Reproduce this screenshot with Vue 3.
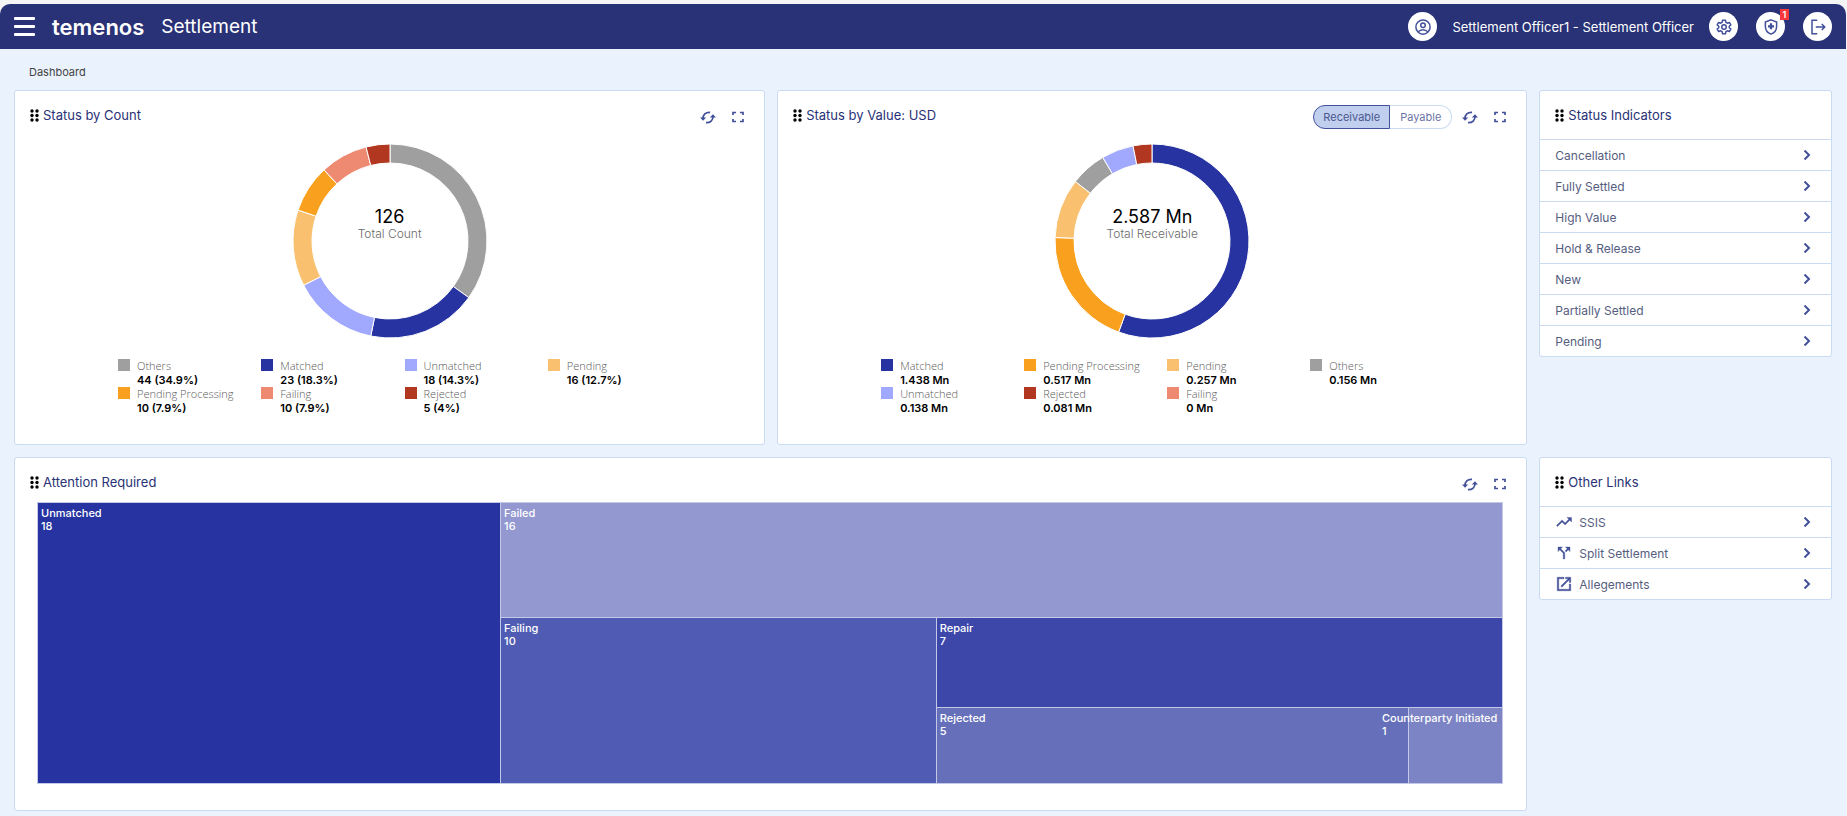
<script setup>
import { ref } from 'vue'

const side = ref('Receivable')

const C = {
  grey: '#9f9f9f', navy: '#2633a0', lilac: '#a1a9ff', sand: '#f9c16f',
  orange: '#f9a11f', salmon: '#ee8a72', brick: '#b13720'
}

const charts = [
  {
    title: 'Status by Count', total: '126', caption: 'Total Count', toggle: false,
    items: [
      { label: 'Others', n: 44, text: '44 (34.9%)', color: C.grey },
      { label: 'Matched', n: 23, text: '23 (18.3%)', color: C.navy },
      { label: 'Unmatched', n: 18, text: '18 (14.3%)', color: C.lilac },
      { label: 'Pending', n: 16, text: '16 (12.7%)', color: C.sand },
      { label: 'Pending Processing', n: 10, text: '10 (7.9%)', color: C.orange },
      { label: 'Failing', n: 10, text: '10 (7.9%)', color: C.salmon },
      { label: 'Rejected', n: 5, text: '5 (4%)', color: C.brick }
    ]
  },
  {
    title: 'Status by Value: USD', total: '2.587 Mn', caption: 'Total Receivable', toggle: true,
    items: [
      { label: 'Matched', n: 1.438, text: '1.438 Mn', color: C.navy },
      { label: 'Pending Processing', n: 0.517, text: '0.517 Mn', color: C.orange },
      { label: 'Pending', n: 0.257, text: '0.257 Mn', color: C.sand },
      { label: 'Others', n: 0.156, text: '0.156 Mn', color: C.grey },
      { label: 'Unmatched', n: 0.138, text: '0.138 Mn', color: C.lilac },
      { label: 'Rejected', n: 0.081, text: '0.081 Mn', color: C.brick },
      { label: 'Failing', n: 0, text: '0 Mn', color: C.salmon }
    ]
  }
]

function arcs(items) {
  const sum = items.reduce((s, i) => s + i.n, 0)
  const R = 97
  const r = 78
  let a = 0
  return items.filter(i => i.n > 0).map(i => {
    const b = a + (i.n / sum) * Math.PI * 2
    const large = b - a > Math.PI ? 1 : 0
    const p = (rad, t) => `${(98 + rad * Math.sin(t)).toFixed(2)} ${(98 - rad * Math.cos(t)).toFixed(2)}`
    const d = `M${p(R, a)}A${R} ${R} 0 ${large} 1 ${p(R, b)}L${p(r, b)}A${r} ${r} 0 ${large} 0 ${p(r, a)}Z`
    a = b
    return { d, color: i.color }
  })
}

const indicators = ['Cancellation', 'Fully Settled', 'High Value', 'Hold & Release', 'New', 'Partially Settled', 'Pending']

const links = [
  { name: 'SSIS', icon: 'M16 6l2.29 2.29-4.88 4.88-4-4L2 16.59 3.41 18l6-6 4 4 6.3-6.29L22 12V6z' },
  { name: 'Split Settlement', icon: 'M14 4l2.29 2.29-2.88 2.88 1.42 1.42 2.88-2.88L20 10V4zM10 4H4v6l2.29-2.29 4.71 4.7V20h2v-8.41l-5.29-5.3z' },
  { name: 'Allegements', icon: 'M19 19H5V5h7V3H3v18h18v-9h-2v7zM14 3v2h3.59l-9.83 9.83 1.41 1.41L19 6.41V10h2V3h-7z' }
]
</script>

<template>
  <div class="page">
    <header class="bar">
      <button class="menu" aria-label="Menu"><i></i><i></i><i></i></button>
      <span class="brand">temenos</span>
      <span class="product">Settlement</span>
      <div class="tools">
        <button class="round" aria-label="Profile">
          <svg viewBox="0 0 24 24" width="18" height="18"><g fill="none" stroke="currentColor" stroke-width="2"><circle cx="12" cy="12" r="9.5" /><circle cx="12" cy="9.5" r="3" /><path d="M5.5 18.5c3.5-4 9.5-4 13 0" /></g></svg>
        </button>
        <span class="user">Settlement Officer1 - Settlement Officer</span>
        <button class="round" aria-label="Settings">
          <svg viewBox="0 0 24 24" width="18" height="18"><g fill="none" stroke="currentColor" stroke-width="2" stroke-linejoin="round"><path d="M10 3h4l.5 2.7 2 1.2 2.6-1 2 3.4-2.1 1.7v2l2.1 1.7-2 3.4-2.6-1-2 1.2L14 21h-4l-.5-2.7-2-1.2-2.6 1-2-3.4L5 13v-2L2.9 9.3l2-3.4 2.6 1 2-1.2z" /><circle cx="12" cy="12" r="3" /></g></svg>
        </button>
        <button class="round" aria-label="Alerts">
          <svg viewBox="0 0 24 24" width="18" height="18"><path d="M12 2.5l7.5 3V11c0 5-3 8.8-7.5 10.5C7.5 19.8 4.5 16 4.5 11V5.5z" fill="none" stroke="currentColor" stroke-width="2" /><path d="M10.5 7h3v2.500H16v3h-2.500V15h-3v-2.500H8v-3h2.500z" fill="currentColor" /></svg>
          <span class="badge">1</span>
        </button>
        <button class="round" aria-label="Log out">
          <svg viewBox="0 0 24 24" width="18" height="18" fill="none" stroke="currentColor" stroke-width="2"><path d="M11 3H4v18h7M9 12h11.500M17 8l4 4-4 4" /></svg>
        </button>
      </div>
    </header>

    <nav class="crumb">Dashboard</nav>

    <main class="board">
      <section v-for="c in charts" :key="c.title" class="card">
        <div class="head">
          <svg class="grip" viewBox="0 0 9 13" width="9" height="13"><g v-for="y in [2, 6.5, 11]" :key="y"><circle cx="2" :cy="y" r="1.7" /><circle cx="7" :cy="y" r="1.7" /></g></svg>
          <h2>{{ c.title }}</h2>
          <div class="acts">
            <div v-if="c.toggle" class="toggle">
              <button v-for="s in ['Receivable', 'Payable']" :key="s" :class="{ on: side === s }" @click="side = s">{{ s }}</button>
            </div>
            <button class="act" aria-label="Refresh"><svg viewBox="0 0 16 13" width="16" height="13"><g fill="none" stroke="currentColor" stroke-width="1.7"><path d="M3 7.500C3 3.800 5.500 1 10 1.300M13 5.500c0 3.700-2.500 6.500-7 6.200" /></g><path d="M0 6.500h6.200L3 9.800zM16 6.500H9.800L13 3.200z" fill="currentColor" /></svg></button>
            <button class="act" aria-label="Full screen"><svg viewBox="0 0 12 12" width="12" height="12"><path d="M1 4V1.500h3M8 1.500h3V4M11 8v2.500H8M4 10.500H1V8" fill="none" stroke="currentColor" stroke-width="1.7" /></svg></button>
          </div>
        </div>
        <div class="donut">
          <svg viewBox="0 0 196 196" width="196" height="196">
            <path v-for="(a, k) in arcs(c.items)" :key="k" :d="a.d" :fill="a.color" stroke="#fff" stroke-width="1" />
          </svg>
          <div class="center"><strong>{{ c.total }}</strong><span>{{ c.caption }}</span></div>
        </div>
        <ul class="legend">
          <li v-for="i in c.items" :key="i.label">
            <i :style="{ background: i.color }"></i>
            <div><span>{{ i.label }}</span><b>{{ i.text }}</b></div>
          </li>
        </ul>
      </section>

      <aside class="card">
        <div class="head">
          <svg class="grip" viewBox="0 0 9 13" width="9" height="13"><g v-for="y in [2, 6.5, 11]" :key="y"><circle cx="2" :cy="y" r="1.7" /><circle cx="7" :cy="y" r="1.7" /></g></svg>
          <h2>Status Indicators</h2>
        </div>
        <a v-for="n in indicators" :key="n" href="#" class="row">
          <span>{{ n }}</span>
          <svg class="chev" viewBox="0 0 8 10" width="8" height="10"><path d="M1.5 .5L6 5l-4.500 4.500" /></svg>
        </a>
      </aside>

      <section class="card wide">
        <div class="head">
          <svg class="grip" viewBox="0 0 9 13" width="9" height="13"><g v-for="y in [2, 6.5, 11]" :key="y"><circle cx="2" :cy="y" r="1.7" /><circle cx="7" :cy="y" r="1.7" /></g></svg>
          <h2>Attention Required</h2>
          <div class="acts">
            <button class="act" aria-label="Refresh"><svg viewBox="0 0 16 13" width="16" height="13"><g fill="none" stroke="currentColor" stroke-width="1.7"><path d="M3 7.500C3 3.800 5.500 1 10 1.300M13 5.500c0 3.700-2.500 6.500-7 6.200" /></g><path d="M0 6.500h6.200L3 9.800zM16 6.500H9.800L13 3.200z" fill="currentColor" /></svg></button>
            <button class="act" aria-label="Full screen"><svg viewBox="0 0 12 12" width="12" height="12"><path d="M1 4V1.500h3M8 1.500h3V4M11 8v2.500H8M4 10.500H1V8" fill="none" stroke="currentColor" stroke-width="1.7" /></svg></button>
          </div>
        </div>
        <div class="map">
          <div class="tile unmatched">Unmatched<br />18</div>
          <div class="split right">
            <div class="tile failed">Failed<br />16</div>
            <div class="split lower">
              <div class="tile failing">Failing<br />10</div>
              <div class="split last">
                <div class="tile repair">Repair<br />7</div>
                <div class="split pair">
                  <div class="tile rejected">Rejected<br />5</div>
                  <div class="tile party"><span>Counterparty Initiated<br />1</span></div>
                </div>
              </div>
            </div>
          </div>
        </div>
      </section>

      <aside class="card">
        <div class="head">
          <svg class="grip" viewBox="0 0 9 13" width="9" height="13"><g v-for="y in [2, 6.5, 11]" :key="y"><circle cx="2" :cy="y" r="1.7" /><circle cx="7" :cy="y" r="1.7" /></g></svg>
          <h2>Other Links</h2>
        </div>
        <a v-for="l in links" :key="l.name" href="#" class="row">
          <svg class="lead" viewBox="0 0 24 24" width="18" height="18"><path :d="l.icon" fill="currentColor" stroke="currentColor" stroke-width=".5" /></svg>
          <span>{{ l.name }}</span>
          <svg class="chev" viewBox="0 0 8 10" width="8" height="10"><path d="M1.5 .5L6 5l-4.500 4.500" /></svg>
        </a>
      </aside>
    </main>
  </div>
</template>

<style>
body {
  background: #f5f5f5;
}
</style>

<style scoped>
.page {
  box-sizing: border-box;
  min-height: calc(100vh - 4px);
  margin: 4px 1px 0 0;
  padding-bottom: 5px;
  background: #eaf2fe;
  border-radius: 10px 10px 0 0;
  font-family: Inter, "Noto Sans", sans-serif;
  font-size: 11px;
  color: #4c5470;
}
button {
  font: inherit;
  padding: 0;
  border: 0;
  background: none;
  cursor: pointer;
}
svg {
  display: block;
}
.bar {
  display: flex;
  align-items: center;
  height: 45px;
  padding: 0 14px;
  border-radius: 10px 10px 0 0;
  background: #293276;
  color: #fff;
}
.menu {
  display: grid;
  gap: 5px;
  width: 21px;
  margin-right: 17px;
}
.menu i {
  height: 3px;
  border-radius: 1px;
  background: #fff;
}
.brand {
  font-size: 22px;
  font-weight: 600;
  line-height: 28px;
  margin-right: 17px;
}
.product {
  font-size: 19px;
  line-height: 28px;
}
.tools {
  display: flex;
  align-items: center;
  margin-left: auto;
}
.user {
  font-size: 13px;
  margin: 0 15px;
}
.round {
  position: relative;
  display: grid;
  place-items: center;
  width: 29px;
  height: 29px;
  border-radius: 50%;
  background: #fff;
  color: #43509a;
}
.round + .round {
  margin-left: 18px;
}
.badge {
  position: absolute;
  top: -3px;
  right: -4px;
  width: 9px;
  background: #f8383c;
  color: #fff;
  font-size: 9px;
  font-weight: 600;
  line-height: 11px;
}
.crumb {
  padding: 15px 29px 0;
  height: 26px;
  line-height: 16px;
  color: #444;
}
.board {
  display: grid;
  grid-template-columns: minmax(0, 752fr) minmax(0, 751fr) minmax(0, 293fr);
  gap: 12px;
  align-items: start;
  padding: 0 14px;
}
.card {
  border: 1px solid #c9daf2;
  border-radius: 3px;
  background: #fff;
}
.wide {
  grid-column: span 2;
}
.head {
  display: flex;
  height: 48px;
  padding-left: 15px;
}
.grip {
  margin: 18px 4px 0 0;
}
h2 {
  margin: 16px 0 0;
  font-size: 13px;
  font-weight: 400;
  line-height: 16px;
  color: #293276;
}
.acts {
  display: flex;
  align-items: center;
  align-self: flex-start;
  height: 24px;
  margin: 14px 20px 0 auto;
}
.act {
  color: #43509a;
}
.act + .act {
  margin-left: 16px;
}
.toggle {
  display: flex;
  margin-right: 10px;
}
.toggle button {
  height: 24px;
  padding: 0 10px;
  border: 1px solid #c9daf2;
  border-left: 0;
  border-radius: 0 12px 12px 0;
  color: #6d75a8;
}
.toggle button:first-child {
  border-left: 1px solid #c9daf2;
  border-radius: 12px 0 0 12px;
}
.toggle button.on {
  padding: 0 9px;
  border: 1px solid #43509a;
  background: #c0cfee;
  color: #4c5890;
}
.donut {
  position: relative;
  display: flex;
  justify-content: center;
  margin-top: 4px;
}
.center {
  position: absolute;
  top: 64px;
  left: 0;
  right: 0;
  text-align: center;
  font-size: 12px;
  font-weight: 300;
  line-height: 14px;
  color: #6a6a6a;
}
.center strong {
  display: block;
  font-size: 18px;
  font-weight: 400;
  line-height: 20px;
  color: #000;
}
.legend {
  display: grid;
  grid-template-columns: repeat(4, minmax(0, 1fr));
  margin: 0;
  padding: 20px 73px 29px 103px;
  list-style: none;
}
.legend li {
  display: flex;
  gap: 7px;
  line-height: 14px;
  white-space: nowrap;
}
.legend i {
  width: 12px;
  height: 12px;
}
.legend span,
.legend b {
  display: block;
}
.legend span {
  font-family: "Open Sans", sans-serif;
  font-weight: 300;
  color: #5a5a5a;
}
.legend b {
  font-weight: 600;
  color: #000;
}
.row {
  display: flex;
  align-items: center;
  height: 30px;
  padding: 0 20px 0 15px;
  border-top: 1px solid #c9daf2;
  font-size: 12px;
  color: #565e80;
  text-decoration: none;
}
.lead {
  margin-right: 6px;
  color: #43509a;
}
.chev {
  margin-left: auto;
  fill: none;
  stroke: #43509a;
  stroke-width: 2;
}
.map {
  display: grid;
  grid-template-columns: 463fr 1002fr;
  height: 281px;
  margin: -4px 23px 26px 22px;
  border: solid #c3c8e6;
  border-width: 0 1px 1px 0;
}
.split {
  display: grid;
  min-width: 0;
  min-height: 0;
}
.right {
  grid-template-rows: 115fr 166fr;
}
.lower {
  grid-template-columns: 436fr 567fr;
}
.last {
  grid-template-rows: 90fr 76fr;
}
.pair {
  grid-template-columns: 473fr 94fr;
}
.tile {
  position: relative;
  min-width: 0;
  padding: 4px 3px;
  border: solid #c3c8e6;
  border-width: 1px 0 0 1px;
  color: #fff;
  font-weight: 500;
  line-height: 13px;
}
.unmatched { background: #2633a0; }
.failed { background: #9399d0; }
.failing { background: #505cb3; }
.repair { background: #3c47a9; }
.rejected { background: #6670ba; }
.party { background: #7d84c5; }
.party span {
  position: absolute;
  top: 4px;
  right: 5px;
  white-space: nowrap;
}
</style>
